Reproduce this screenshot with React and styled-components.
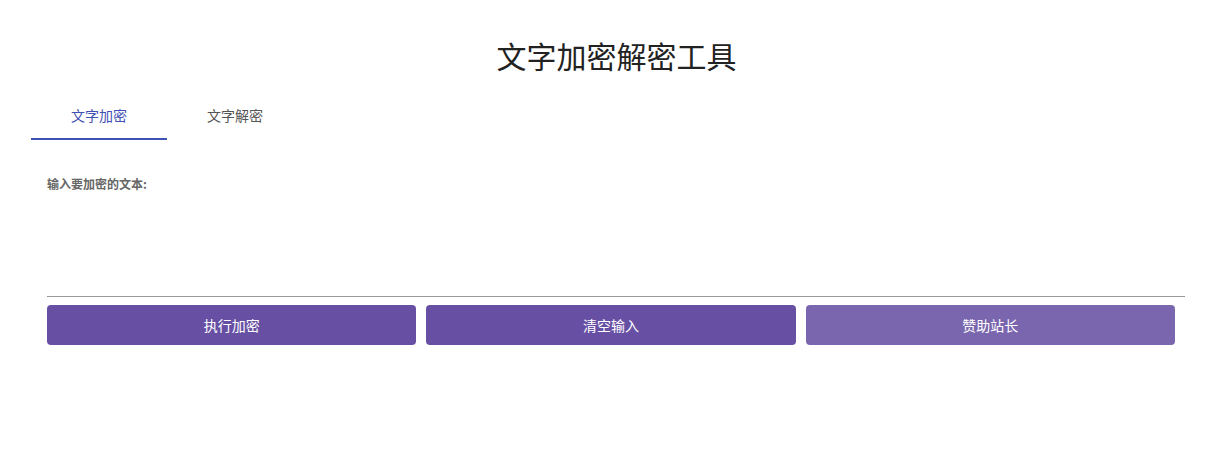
import React, { useState } from 'react'
import styled, { createGlobalStyle } from 'styled-components'

const GlobalStyle = createGlobalStyle`
  body {
    margin: 0;
    background: #fff;
    font-family: "Noto Sans CJK SC", "Noto Sans", sans-serif;
  }
`

export default function App() {
  const [active, setActive] = useState(0)
  const [text, setText] = useState('')

  return (
    <Page>
      <GlobalStyle />
      <Title>文字加密解密工具</Title>
      <Tabs>
        {['文字加密', '文字解密'].map((label, i) => (
          <Tab key={label} active={active === i} onClick={() => setActive(i)}>
            {label}
          </Tab>
        ))}
      </Tabs>
      <Panel>
        <Label>{active === 0 ? '输入要加密的文本:' : '输入要解密的文本:'}</Label>
        <TextArea value={text} onChange={e => setText(e.target.value)} />
        <Buttons>
          <Button>{active === 0 ? '执行加密' : '执行解密'}</Button>
          <Button onClick={() => setText('')}>清空输入</Button>
          <Button light>赞助站长</Button>
        </Buttons>
      </Panel>
    </Page>
  )
}

const Page = styled.div`
  padding: 37px 29px 0 31px;
`

const Title = styled.h1`
  margin: 0;
  padding-left: 17px;
  text-align: center;
  font-size: 30px;
  line-height: 36px;
  font-weight: 400;
  color: #222;
`

const Tabs = styled.div`
  display: flex;
  margin-top: 19px;
`

const Tab = styled.div`
  width: 136px;
  height: 48px;
  box-sizing: border-box;
  display: flex;
  align-items: center;
  justify-content: center;
  font-size: 14px;
  color: ${props => (props.active ? '#3f51b5' : '#555')};
  border-bottom: 2px solid ${props => (props.active ? '#3f51b5' : 'transparent')};
  cursor: pointer;
`

const Panel = styled.div`
  padding: 36px 0 0 16px;
`

const Label = styled.div`
  font-size: 12px;
  font-weight: 700;
  color: #666;
  line-height: 16px;
`

const TextArea = styled.textarea`
  display: block;
  width: 100%;
  height: 105px;
  box-sizing: border-box;
  border: none;
  border-bottom: 1px solid #999;
  outline: none;
  resize: none;
  font-family: inherit;
  font-size: 13px;
`

const Buttons = styled.div`
  display: flex;
  margin-top: 8px;
`

const Button = styled.button`
  flex: 1;
  height: 40px;
  margin-right: 10px;
  border: none;
  border-radius: 4px;
  background: ${props => (props.light ? '#7a66ae' : '#6750a4')};
  color: #fff;
  font-family: inherit;
  font-size: 14px;
  cursor: pointer;
`
